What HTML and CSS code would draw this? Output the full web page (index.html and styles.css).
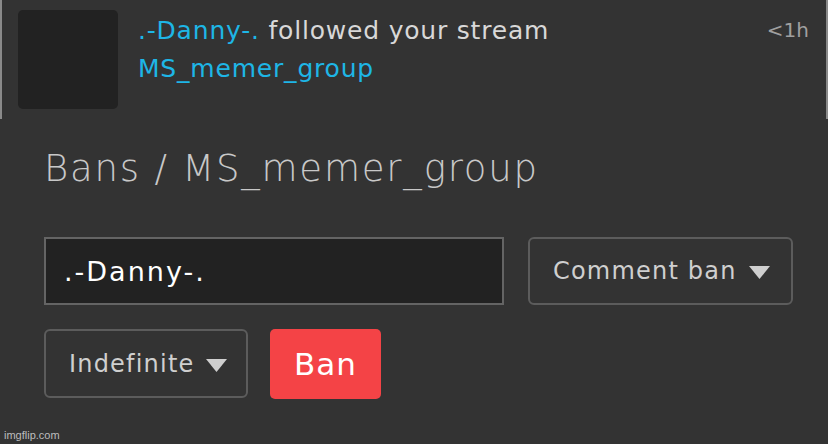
FILE: index.html
```html
<!DOCTYPE html>
<html lang="en">
<head>
  <meta charset="UTF-8">
  <meta name="viewport" content="width=device-width, initial-scale=1.0">
  <title>Bans - MS_memer_group</title>
  <link rel="stylesheet" href="styles.css">
</head>
<body>
  <div class="notice">
    <div class="avatar"></div>
    <div class="notice-body">
      <div class="line"><a class="user">.-Danny-.</a> followed your stream</div>
      <div class="line"><a class="user">MS_memer_group</a></div>
    </div>
    <div class="time">&lt;1h</div>
  </div>

  <main class="bans">
    <h1>Bans / MS_memer_group</h1>
    <div class="row">
      <input class="user-input" type="text" value=".-Danny-.">
      <div class="select select-type">
        <span>Comment ban</span>
        <svg class="caret" width="21" height="13" viewBox="0 0 21 13"><polygon points="0,0 21,0 10.5,13" fill="#cfcfcf"/></svg>
      </div>
    </div>
    <div class="row">
      <div class="select select-time">
        <span>Indefinite</span>
        <svg class="caret" width="21" height="13" viewBox="0 0 21 13"><polygon points="0,0 21,0 10.5,13" fill="#cfcfcf"/></svg>
      </div>
      <button class="ban-btn">Ban</button>
    </div>
  </main>

  <div class="watermark">imgflip.com</div>
</body>
</html>
```

FILE: styles.css
```css
* {
  box-sizing: border-box;
}

body {
  margin: 0;
  height: 444px;
  background: #333;
  font-family: 'DejaVu Sans', 'Liberation Sans', sans-serif;
  color: #ddd;
  position: relative;
  overflow: hidden;
}

.notice {
  display: flex;
  height: 119px;
  padding: 10px 17px 0 16px;
  border-left: 2px solid #8a8a8a;
  border-right: 2px solid #8a8a8a;
}

.avatar {
  width: 100px;
  height: 99px;
  background: #222;
  border-radius: 5px;
  flex-shrink: 0;
}

.notice-body {
  flex: 1;
  margin-left: 20px;
  padding-top: 2px;
}

.line {
  font-size: 25px;
  letter-spacing: 0.8px;
  line-height: 38px;
  color: #d8d8d8;
}

.user {
  color: #1eb6e6;
}

.time {
  font-size: 20px;
  line-height: 38px;
  padding-top: 1px;
  color: #a0a0a0;
}

.bans {
  padding: 0 0 0 44px;
}

h1 {
  margin: 27px 0 45px;
  font-weight: 200;
  font-size: 37px;
  letter-spacing: 1.8px;
  line-height: 46px;
  color: #c8c8c8;
}

.row {
  display: flex;
  margin-bottom: 24px;
}

.user-input {
  width: 460px;
  height: 68px;
  margin: 0;
  padding: 0 0 0 18px;
  background: #222;
  border: 2px solid #646464;
  border-radius: 0;
  color: #fff;
  font-family: 'DejaVu Sans', 'Liberation Sans', sans-serif;
  font-size: 27px;
  letter-spacing: 2px;
  outline: none;
}

.select {
  display: flex;
  align-items: center;
  height: 69px;
  padding-left: 23px;
  border: 2px solid #5c5c5c;
  border-radius: 6px;
  color: #cfcfcf;
  font-size: 24px;
  letter-spacing: 1.2px;
  flex-shrink: 0;
}

.select .caret {
  margin-left: 12px;
  margin-top: 3px;
}

.select-type {
  width: 265px;
  height: 68px;
  margin-left: 24px;
}

.select-time {
  width: 204px;
}

.ban-btn {
  width: 111px;
  height: 70px;
  margin-left: 22px;
  padding: 0;
  background: #f44346;
  border: none;
  border-radius: 5px;
  color: #fff;
  font-family: 'DejaVu Sans', 'Liberation Sans', sans-serif;
  font-size: 31px;
  letter-spacing: 1px;
}

.watermark {
  position: absolute;
  left: 4px;
  bottom: 3px;
  font-family: 'Liberation Sans', sans-serif;
  font-size: 11px;
  color: #bdbdbd;
}
```
